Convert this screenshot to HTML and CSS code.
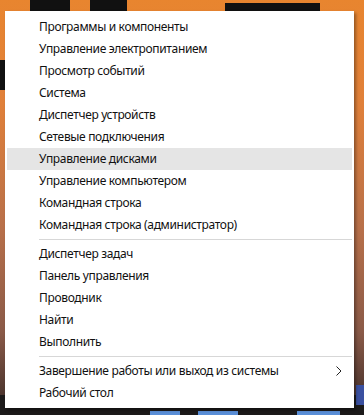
FILE: index.html
```html
<!DOCTYPE html>
<html lang="ru">
<head>
<meta charset="utf-8">
<link rel="stylesheet" href="styles.css">
</head>
<body>
<div class="menu">
  <div class="item">Программы и компоненты</div>
  <div class="item">Управление электропитанием</div>
  <div class="item">Просмотр событий</div>
  <div class="item">Система</div>
  <div class="item">Диспетчер устройств</div>
  <div class="item">Сетевые подключения</div>
  <div class="item active">Управление дисками</div>
  <div class="item">Управление компьютером</div>
  <div class="item">Командная строка</div>
  <div class="item">Командная строка (администратор)</div>
  <div class="sep"></div>
  <div class="item">Диспетчер задач</div>
  <div class="item">Панель управления</div>
  <div class="item">Проводник</div>
  <div class="item">Найти</div>
  <div class="item">Выполнить</div>
  <div class="sep"></div>
  <div class="item sub">Завершение работы или выход из системы
    <svg class="chev" width="6" height="10" viewBox="0 0 6 10"><path d="M0.5 0.5 L5 5 L0.5 9.5" fill="none" stroke="#222" stroke-width="1"/></svg>
  </div>
  <div class="item">Рабочий стол</div>
</div>
</body>
</html>
```
FILE: styles.css
```css
html, body { margin: 0; padding: 0; }
body {
  width: 364px;
  height: 415px;
  overflow: hidden;
  font-family: "Segoe UI", "Noto Sans", "Open Sans", sans-serif;
  background:
    linear-gradient(#5a8fd8, #5a8fd8) 150px 411px / 30px 4px no-repeat,
    linear-gradient(#5a8fd8, #5a8fd8) 198px 411px / 40px 4px no-repeat,
    linear-gradient(#5a8fd8, #5a8fd8) 297px 411px / 43px 4px no-repeat,
    linear-gradient(#3a50a0, #3a50a0) 356px 385px / 8px 20px no-repeat,
    linear-gradient(#111, #111) 30px 0 / 40px 11px no-repeat,
    linear-gradient(#111, #111) 90px 0 / 37px 11px no-repeat,
    linear-gradient(#111, #111) 225px 3px / 95px 8px no-repeat,
    linear-gradient(#111, #111) 0 60px / 5px 30px no-repeat,
    linear-gradient(#1c1a1a, #1c1a1a) 0 395px / 100% 20px no-repeat,
    linear-gradient(to bottom, #e8852f 0, #e0803a 25%, #b8704a 55%, #8a5a48 80%, #3a2a26 100%) 0 0 / 100% 100% no-repeat;
}
.menu {
  margin: 11px 0 0 5px;
  width: 349px;
  height: 397px;
  box-sizing: border-box;
  background: #fff;
  padding: 5px 2px 4px;
  box-shadow: 2px 2px 3px rgba(0,0,0,0.35);
  color: #111;
}
.item {
  height: 22px;
  line-height: 22px;
  padding-left: 32px;
  font-size: 12px;
  letter-spacing: -0.34px;
  white-space: nowrap;
  display: flex;
  align-items: center;
}
.item.active { background: #e5e5e5; }
.item.sub { justify-content: space-between; padding-right: 10px; }
.chev { display: block; }
.sep {
  height: 1px;
  background: #d7d7d7;
  margin: 3px 0 3px 32px;
}
```
